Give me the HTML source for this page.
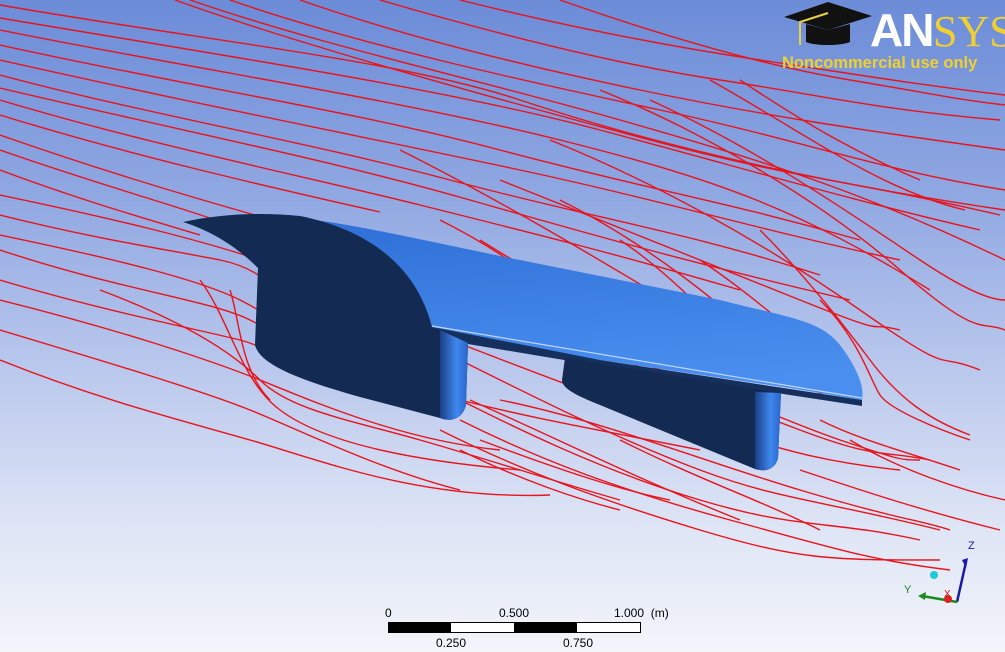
<!DOCTYPE html>
<html><head><meta charset="utf-8"><style>
html,body{margin:0;padding:0;width:1005px;height:652px;overflow:hidden}
body{background:linear-gradient(#6c8cd8 0%,#90a8e2 30%,#b7c6ec 55%,#dde4f5 80%,#f3f5fb 100%);position:relative;font-family:"Liberation Sans",sans-serif}
.t{position:absolute;font-size:12px;color:#000}
</style></head><body>
<svg width="1005" height="652" style="position:absolute;left:0;top:0">
<defs>
<linearGradient id="w" x1="0" y1="0" x2="0.2" y2="1"><stop offset="0" stop-color="#2f6fd6"/><stop offset="1" stop-color="#4a8ff0"/></linearGradient>
<linearGradient id="s" x1="0" x2="1"><stop offset="0" stop-color="#1a3f86"/><stop offset="0.6" stop-color="#3f87ee"/><stop offset="1" stop-color="#2a66c8"/></linearGradient>
</defs>
<g fill="none" stroke="#e8141c" stroke-width="1.4">
<path d="M0 5 C200 40 400 60 520 100 S800 180 1005 210"/>
<path d="M0 18 C250 60 450 90 600 130 S850 200 980 230"/>
<path d="M0 30 C200 70 400 100 560 140 S800 210 930 290"/>
<path d="M0 45 C180 85 350 110 500 150 S720 200 860 240"/>
<path d="M0 60 C200 105 380 140 520 170 S760 230 900 260"/>
<path d="M0 75 C150 115 300 140 450 180 S680 230 820 275"/>
<path d="M0 88 C200 135 330 160 470 200 S700 265 850 300"/>
<path d="M0 100 C150 145 300 175 420 205 S620 255 740 290"/>
<path d="M0 115 C130 155 260 185 380 212"/>
<path d="M0 135 C100 170 200 200 280 222"/>
<path d="M0 150 C100 185 190 210 230 225"/>
<path d="M0 170 C80 200 150 220 200 235"/>
<path d="M175 0 C300 45 500 100 650 140 S850 180 1000 215"/>
<path d="M190 0 C320 45 480 80 620 120 S860 190 1005 260"/>
<path d="M230 0 C360 45 520 80 660 110 S880 170 1005 190"/>
<path d="M300 0 C400 35 520 65 640 90 S860 130 1005 150"/>
<path d="M380 0 C500 35 620 65 720 80 S880 110 1000 120"/>
<path d="M460 0 C560 25 660 45 760 60 S920 85 1005 95"/>
<path d="M560 0 C660 35 760 65 850 80 S960 100 1005 105"/>
<path d="M710 80 C800 130 880 190 965 210"/>
<path d="M740 80 C800 120 850 150 920 180"/>
<path d="M600 90 C700 130 820 200 900 270 S980 320 1005 330"/>
<path d="M650 100 C760 150 860 220 920 260 S1000 300 1005 300"/>
<path d="M550 140 C650 180 760 240 860 310 S930 350 980 370"/>
<path d="M500 180 C600 220 700 260 800 300 S860 320 900 330"/>
<path d="M560 200 C640 240 720 300 780 360 S820 380 830 380"/>
<path d="M400 150 C500 200 600 260 700 320"/>
<path d="M440 220 C520 260 560 300 600 330"/>
<path d="M480 240 C560 290 640 330 700 360"/>
<path d="M620 240 C680 280 720 330 760 370"/>
<path d="M700 260 C760 300 800 340 830 360"/>
<path d="M760 230 C800 270 840 320 870 360 S930 420 970 435"/>
<path d="M820 300 C860 340 870 380 880 395 S940 430 970 440"/>
<path d="M0 195 C120 220 200 240 260 260 S400 320 470 330 S650 380 760 400"/>
<path d="M0 215 C100 240 170 250 220 260 S280 300 300 310"/>
<path d="M0 235 C120 260 200 280 240 300 S300 340 360 360"/>
<path d="M0 250 C120 290 210 300 250 320 S380 380 460 400 S600 430 700 450"/>
<path d="M0 280 C100 310 200 330 240 340 S300 380 340 390"/>
<path d="M0 300 C120 330 210 360 260 380 S400 440 500 450"/>
<path d="M0 330 C100 360 200 390 250 410 S380 470 460 490"/>
<path d="M0 360 C100 400 180 420 250 440 S420 500 550 495"/>
<path d="M100 290 C180 320 230 350 260 380 S350 420 420 440 S550 480 620 500"/>
<path d="M200 280 C230 320 240 380 280 410 S400 460 520 470"/>
<path d="M230 290 C240 320 240 370 270 400"/>
<path d="M450 340 C530 370 600 400 680 420 S800 460 900 470"/>
<path d="M460 360 C540 400 620 440 700 470 S820 500 940 530"/>
<path d="M440 390 C520 430 600 470 700 500 S830 520 920 540"/>
<path d="M470 400 C560 440 640 480 740 520"/>
<path d="M460 420 C540 460 620 490 730 520 S870 560 950 570"/>
<path d="M440 430 C520 470 600 500 700 530 S830 560 940 560"/>
<path d="M480 440 C560 470 620 490 670 500"/>
<path d="M460 450 C520 480 580 500 620 510"/>
<path d="M620 440 C700 480 760 500 820 530"/>
<path d="M500 400 C600 420 700 460 800 490 S920 520 950 530"/>
<path d="M600 350 C700 380 780 420 840 440 S900 460 920 460"/>
<path d="M560 330 C640 370 720 400 800 430 S880 450 930 460"/>
<path d="M820 420 C860 440 900 450 960 470"/>
<path d="M800 470 C860 490 920 510 1000 530"/>
<path d="M850 440 C900 470 960 490 1005 500"/>
</g>
<path d="M300 218 C360 225 420 240 520 260 L720 300 C790 318 820 320 840 345 C855 365 865 385 862 400 L790 388 L600 360 L470 338 L432 327 C420 290 380 250 300 218 Z" fill="url(#w)"/>
<path d="M432 327 L600 360 L862 400 L862 406 L600 366 L468 344 Z" fill="#16305e"/>
<path d="M432 326 L862 398" stroke="#bcd6ff" stroke-width="1.2"/>
<path d="M183 222 C220 214 260 212 300 216 C360 228 415 260 432 327 L468 343 L466 405 C462 420 450 422 440 418 L360 397 C300 380 260 365 255 345 L258 268 C240 250 215 232 183 222 Z" fill="#132a52"/>
<path d="M440 330 L468 343 L466 405 C462 420 450 422 440 418 Z" fill="url(#s)"/>
<path d="M565 358 L781 393 L778 458 C775 470 765 472 755 469 L600 405 C575 395 562 388 562 380 Z" fill="#132a52"/>
<path d="M755 392 L781 393 L778 458 C775 470 765 472 755 469 Z" fill="url(#s)"/>
<rect x="388.5" y="622.5" width="252" height="10" fill="#fff" stroke="#000"/>
<rect x="388" y="622" width="63" height="11" fill="#000"/>
<rect x="514" y="622" width="63" height="11" fill="#000"/>
<line x1="957" y1="602" x2="966" y2="562" stroke="#1a1aa8" stroke-width="2.5"/>
<path d="M962 560 L968 558 L966 568 Z" fill="#1a1aa8"/>
<line x1="957" y1="602" x2="922" y2="596" stroke="#1a8a1a" stroke-width="2.5"/>
<path d="M918 596 L926 592 L925 600 Z" fill="#1a8a1a"/>
<circle cx="948" cy="599" r="4" fill="#e02020"/>
<circle cx="934" cy="575" r="4" fill="#20c8d8"/>
<text x="968" y="549" font-size="11" fill="#1a1aa8" font-family="Liberation Sans">Z</text>
<text x="904" y="593" font-size="11" fill="#1a8a1a" font-family="Liberation Sans">Y</text>
<text x="944" y="597" font-size="10" fill="#c02020" font-family="Liberation Sans">X</text>
<path d="M784 17 L828 2 L872 16 L828 30 Z" fill="#111"/>
<path d="M806 24 L806 42 C815 46 840 46 850 42 L850 24 L828 30 Z" fill="#111"/>
<path d="M828 13 L800 22 L800 45" stroke="#e8d040" stroke-width="2" fill="none"/>
<text x="870" y="46" font-size="46" font-weight="bold" fill="#fff" font-family="Liberation Sans" letter-spacing="-2">AN</text>
<text x="933" y="46" font-size="44" fill="#f0d030" font-family="Liberation Serif">SYS</text>
<text x="782" y="68" font-size="16.5" font-weight="bold" fill="#f0d030" font-family="Liberation Sans">Noncommercial use only</text>
</svg>
<div class="t" style="left:385px;top:606px">0</div>
<div class="t" style="left:499px;top:606px">0.500</div>
<div class="t" style="left:614px;top:606px">1.000&nbsp;&nbsp;(m)</div>
<div class="t" style="left:436px;top:636px">0.250</div>
<div class="t" style="left:563px;top:636px">0.750</div>
</body></html>
